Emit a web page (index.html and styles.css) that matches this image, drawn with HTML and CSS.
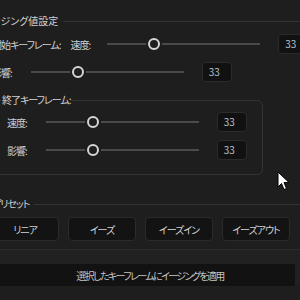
FILE: index.html
```html
<!DOCTYPE html>
<html lang="ja">
<head>
  <meta charset="UTF-8" />
  <title>イージング値設定</title>
  <link rel="stylesheet" href="styles.css">
</head>
<body>

  <div class="panel">

    <div class="section-head title-head">
      <span>イージング値設定</span>
      <div class="rule"></div>
    </div>

    <div class="row">
      <span class="label wide">開始キーフレーム:</span>
      <span class="label">速度:</span>
      <div class="slider"><div class="thumb"></div></div>
      <div class="value">33</div>
    </div>

    <div class="row">
      <span class="label">影響:</span>
      <div class="slider"><div class="thumb"></div></div>
      <div class="value">33</div>
    </div>

    <fieldset class="group">
      <legend>終了キーフレーム:</legend>
      <div class="row">
        <span class="label">速度:</span>
        <div class="slider"><div class="thumb"></div></div>
        <div class="value">33</div>
      </div>
      <div class="row">
        <span class="label">影響:</span>
        <div class="slider"><div class="thumb"></div></div>
        <div class="value">33</div>
      </div>
    </fieldset>

    <div class="section-head presets-head">
      <span>プリセット</span>
      <div class="rule"></div>
    </div>

    <div class="presets">
      <button class="btn">リニア</button>
      <button class="btn">イーズ</button>
      <button class="btn">イーズイン</button>
      <button class="btn">イーズアウト</button>
    </div>

    <div class="footer">
      <button class="apply">選択したキーフレームにイージングを適用</button>
    </div>

  </div>

  <svg class="cursor" width="14" height="20" viewBox="0 0 14 20">
    <path d="M1 1 L1 16 L4.5 12.5 L7 18.5 L9.5 17.5 L7 11.5 L12 11.5 Z" fill="#fff" stroke="#000" stroke-width="1"/>
  </svg>

</body>
</html>
```

FILE: styles.css
```css
:root {
  --bg: #1e1e1e;
  --text: #d2d2d2;
  --line: #343434;
  --field: #111111;
  --field-border: #2b2b2b;
}

body {
  margin: 0;
  background: var(--bg);
  color: var(--text);
  font-family: "Noto Sans CJK JP", "Noto Sans", sans-serif;
  font-feature-settings: "palt";
  font-size: 10px;
  letter-spacing: -1px;
  width: 300px;
  height: 300px;
  overflow: hidden;
  position: relative;
}

.panel {
  margin-left: -8px;
  width: 320px;
  padding-top: 13px;
}

.section-head {
  display: flex;
  align-items: center;
  gap: 5px;
  height: 16px;
  line-height: 16px;
}

.title-head {
  margin-left: -10px;
  letter-spacing: 0;
}

.section-head .rule {
  flex: 1;
  height: 1px;
  background: var(--line);
}

.row {
  display: flex;
  align-items: center;
  height: 20px;
  margin-top: 5px;
}

.row + .row {
  margin-top: 8px;
}

.label {
  margin-right: 19px;
  white-space: nowrap;
}

.label.wide {
  margin-right: 10px;
}

.row .label.wide + .label {
  margin-right: 17px;
}

.slider {
  position: relative;
  width: 153px;
  height: 20px;
  margin-right: 18px;
}

.slider::before {
  content: "";
  position: absolute;
  left: 0;
  right: 0;
  top: 9px;
  height: 2px;
  background: #4a4a4a;
}

.thumb {
  position: absolute;
  left: 41px;
  top: 4px;
  width: 8px;
  height: 8px;
  border: 2px solid #d6d6d6;
  border-radius: 50%;
  background: var(--bg);
  box-shadow: 0 0 0 2px var(--bg);
}

.value {
  width: 30px;
  height: 20px;
  box-sizing: border-box;
  padding-left: 6px;
  line-height: 18px;
  font-size: 10px;
  letter-spacing: 0;
  color: #b8c0ca;
  background: var(--field);
  border: 1px solid var(--field-border);
  border-radius: 4px;
}

.group {
  margin: 10px 0 0 2px;
  width: 269px;
  box-sizing: border-box;
  padding: 4px 0 14px 12px;
  border: 1px solid var(--line);
  border-radius: 6px;
}

.group legend {
  margin-left: -6px;
  padding: 0 1px;
  line-height: 16px;
}

.group .row:first-of-type {
  margin-top: 0;
}

.presets-head {
  margin-top: 21px;
}

.presets {
  display: flex;
  gap: 9px;
  margin: 5px 0 0 -1px;
}

.btn {
  width: 68px;
  height: 24px;
  padding: 0;
  font: inherit;
  letter-spacing: inherit;
  color: var(--text);
  background: #131313;
  border: 1px solid var(--field-border);
  border-radius: 4px;
}

.footer {
  margin-top: 8px;
  padding-top: 14px;
  background: #212121;
  border-top: 1px solid #2c2c2c;
}

.apply {
  display: block;
  width: 303px;
  height: 22px;
  padding: 0 0 0 13px;
  font: inherit;
  letter-spacing: -1.6px;
  color: #c4c4c4;
  background: #121212;
  border: none;
}

.cursor {
  position: absolute;
  left: 277px;
  top: 171px;
}
```
